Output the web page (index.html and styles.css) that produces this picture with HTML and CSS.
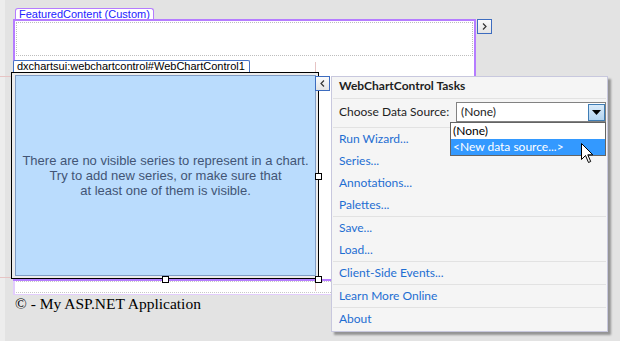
FILE: index.html
```html
<!DOCTYPE html>
<html>
<head>
<meta charset="utf-8">
<link rel="stylesheet" href="styles.css">
</head>
<body>
<div class="canvas">
  <div class="featured">
    <div class="tab tab-featured">FeaturedContent (Custom)</div>
    <div class="featured-box">
      <div class="placeholder"></div>
      <div class="tab tab-chart">dxchartsui:webchartcontrol#WebChartControl1</div>
      <div class="chart">
        <div class="chart-image">
          <p class="chart-msg">There are no visible series to represent in a chart.<br>Try to add new series, or make sure that<br>at least one of them is visible.</p>
        </div>
      </div>
    </div>
  </div>
  <div class="footer-ph"><div class="footer-ph-inner"></div></div>
  <p class="footer">© - My ASP.NET Application</p>

  <div class="guide guide-v1"></div>
  <div class="guide guide-v2"></div>
  <div class="guide guide-h1"></div>
  <div class="guide guide-h2"></div>

  <div class="handle handle-r"></div>
  <div class="handle handle-b"></div>
  <div class="handle handle-br"></div>

  <div class="tag-btn tag-next"><svg width="13" height="13" viewBox="0 0 13 13"><polyline points="5,3.5 8,6.5 5,9.5" fill="none" stroke="#333" stroke-width="1.2"/></svg></div>
  <div class="tag-btn tag-prev"><svg width="13" height="13" viewBox="0 0 13 13"><polyline points="8,3.5 5,6.5 8,9.5" fill="none" stroke="#333" stroke-width="1.2"/></svg></div>

  <div class="panel">
    <div class="panel-title">WebChartControl Tasks</div>
    <div class="panel-sep"></div>
    <div class="choose-row">
      <span class="choose-label">Choose Data Source:</span>
      <div class="select">
        <span class="select-value">(None)</span>
        <span class="select-btn"><svg width="9" height="5" viewBox="0 0 9 5"><polygon points="0,0 9,0 4.5,5" fill="#000"/></svg></span>
      </div>
    </div>
    <div class="panel-sep"></div>
    <div class="group">
      <a class="link">Run Wizard...</a>
      <a class="link">Series...</a>
      <a class="link">Annotations...</a>
      <a class="link">Palettes...</a>
    </div>
    <div class="panel-sep"></div>
    <div class="group">
      <a class="link">Save...</a>
      <a class="link">Load...</a>
    </div>
    <div class="panel-sep"></div>
    <div class="group">
      <a class="link">Client-Side Events...</a>
    </div>
    <div class="panel-sep"></div>
    <div class="group">
      <a class="link">Learn More Online</a>
    </div>
    <div class="panel-sep"></div>
    <div class="group">
      <a class="link">About</a>
    </div>
  </div>

  <div class="dropdown">
    <div class="dd-item">(None)</div>
    <div class="dd-item dd-selected">&lt;New data source...&gt;</div>
  </div>

  <svg class="cursor" width="13" height="21" viewBox="0 0 13 21"><path d="M0.5,0.5 L0.5,16.5 L4.5,12.5 L7.5,19.5 L9.7,18.5 L6.8,11.8 L11.8,11.8 Z" fill="#fff" stroke="#000" stroke-width="1" stroke-linejoin="miter"/></svg>
</div>
</body>
</html>
```

FILE: styles.css
```css
html, body {
  margin: 0;
  padding: 0;
}
body {
  width: 620px;
  height: 341px;
  overflow: hidden;
  background: linear-gradient(to right, #ededed 5px, #e3e3e3 5px);
  font-family: "Liberation Sans", Arial, sans-serif;
}
.canvas {
  position: relative;
  width: 620px;
  height: 341px;
  box-sizing: border-box;
  padding: 8px 0 0 13px;
}
.featured {
  width: 463px;
  display: flex;
  flex-direction: column;
  align-items: flex-start;
}
.tab {
  box-sizing: border-box;
  font-family: "Liberation Sans", Tahoma, sans-serif;
  font-size: 11px;
  line-height: 11px;
  white-space: nowrap;
  border-bottom: 0;
}
.tab-featured {
  margin-left: 2px;
  height: 11px;
  padding: 0 3px;
  border: 1px solid #b57cff;
  border-bottom: 0;
  border-radius: 3px 3px 0 0;
  color: #2222ff;
  background: #fff;
}
.featured-box {
  align-self: stretch;
  border: 2px solid #b57cff;
  background: #fff;
  display: flex;
  flex-direction: column;
  align-items: flex-start;
}
.placeholder {
  align-self: stretch;
  margin: 1px 1px 0;
  height: 32px;
  border: 1px dotted #bdbdbd;
}
.tab-chart {
  margin: 4px 0 0 -2px;
  width: 237px;
  height: 12px;
  padding-left: 3px;
  border: 1px solid #4472c4;
  border-bottom: 0;
  border-radius: 2px 2px 0 0;
  color: #000;
  background: #fff;
}
.chart {
  margin-left: -4px;
  width: 308px;
  height: 207px;
  box-sizing: border-box;
  border: 1px solid #000;
  padding: 2px 2px 2px 3px;
  background: #ececec;
}
.chart-image {
  height: 100%;
  box-sizing: border-box;
  border: 1px solid #809dc5;
  background: #badcfd;
  display: flex;
  align-items: center;
  justify-content: center;
}
.chart-msg {
  margin: 0;
  text-align: center;
  font-family: "Liberation Sans", Arial, sans-serif;
  font-size: 13px;
  line-height: 15px;
  color: #425575;
}
.footer-ph {
  width: 463px;
  height: 14px;
  box-sizing: border-box;
  border: 2px solid #e2cdfc;
  border-top: 0;
  border-bottom-width: 1px;
  background: #fff;
}
.footer-ph-inner {
  margin: 0 1px;
  height: 12px;
  box-sizing: border-box;
  border-top: 1px dotted #c8c8c8;
  border-bottom: 1px dotted #c8c8c8;
}
.footer {
  margin: 0 0 0 2px;
  font-family: "Liberation Serif", "Times New Roman", serif;
  font-size: 15.5px;
  line-height: 18px;
  color: #000;
}

/* designer overlays */
.guide {
  position: absolute;
  background: #e6c4c4;
}
.guide-v1 { left: 315px; top: 62px; width: 1px; height: 10px; }
.guide-v2 { left: 315px; top: 281px; width: 1px; height: 10px; }
.guide-h1 { left: 0; top: 76px; width: 11px; height: 1px; }
.guide-h2 { left: 0; top: 277px; width: 11px; height: 1px; }

.handle {
  position: absolute;
  width: 7px;
  height: 7px;
  box-sizing: border-box;
  border: 1px solid #000;
  background: #fff;
}
.handle-r { left: 315px; top: 173px; }
.handle-b { left: 162px; top: 276px; }
.handle-br { left: 315px; top: 276px; }

.tag-btn {
  position: absolute;
  width: 15px;
  height: 15px;
  box-sizing: border-box;
  border: 1px solid #3d6cbf;
  background: linear-gradient(#fbfbfb, #e4e4e4);
}
.tag-btn svg { display: block; }
.tag-next { left: 477px; top: 19px; }
.tag-prev { left: 315px; top: 76px; }

.panel {
  position: absolute;
  left: 331px;
  top: 76px;
  width: 277px;
  height: 256px;
  box-sizing: border-box;
  border: 1px solid #c8c8de;
  background: #f5f5f5;
  box-shadow: 3px 3px 2px rgba(0, 0, 0, 0.35);
  font-family: Lato, "Open Sans", sans-serif;
  font-size: 12px;
  color: #1e1e1e;
}
.panel-title {
  height: 21px;
  line-height: 18px;
  padding-left: 7px;
  font-weight: bold;
}
.panel-sep {
  height: 1px;
  margin: 0 1px;
  background: #e2e2e2;
}
.choose-row {
  height: 28px;
  box-sizing: border-box;
  padding: 3px 1px 5px 7px;
  display: flex;
  justify-content: space-between;
  align-items: flex-start;
}
.choose-label {
  line-height: 20px;
}
.select {
  width: 150px;
  height: 20px;
  box-sizing: border-box;
  border: 1px solid #828282;
  background: #fff;
  display: flex;
  justify-content: space-between;
  align-items: center;
  padding: 0 0 0 4px;
}
.select-value {
  line-height: 18px;
}
.select-btn {
  width: 17px;
  height: 17px;
  box-sizing: border-box;
  border: 1px solid #3f7db5;
  background: linear-gradient(#d9ebfa, #b3d3ef);
  display: flex;
  align-items: center;
  justify-content: center;
}
.select-btn svg { display: block; }
.group {
  display: flex;
  flex-direction: column;
}
.link {
  height: 22px;
  line-height: 21px;
  padding-left: 7px;
  color: #1e6ed2;
}

.dropdown {
  position: absolute;
  left: 450px;
  top: 122px;
  width: 156px;
  height: 34px;
  box-sizing: border-box;
  border: 1px solid #646464;
  background: #fff;
  font-family: Lato, "Open Sans", sans-serif;
  font-size: 12px;
}
.dd-item {
  height: 16px;
  line-height: 16px;
  padding-left: 2px;
  color: #000;
}
.dd-selected {
  background: #3399ff;
  color: #fff;
}
.cursor {
  position: absolute;
  left: 581px;
  top: 143px;
}
```
